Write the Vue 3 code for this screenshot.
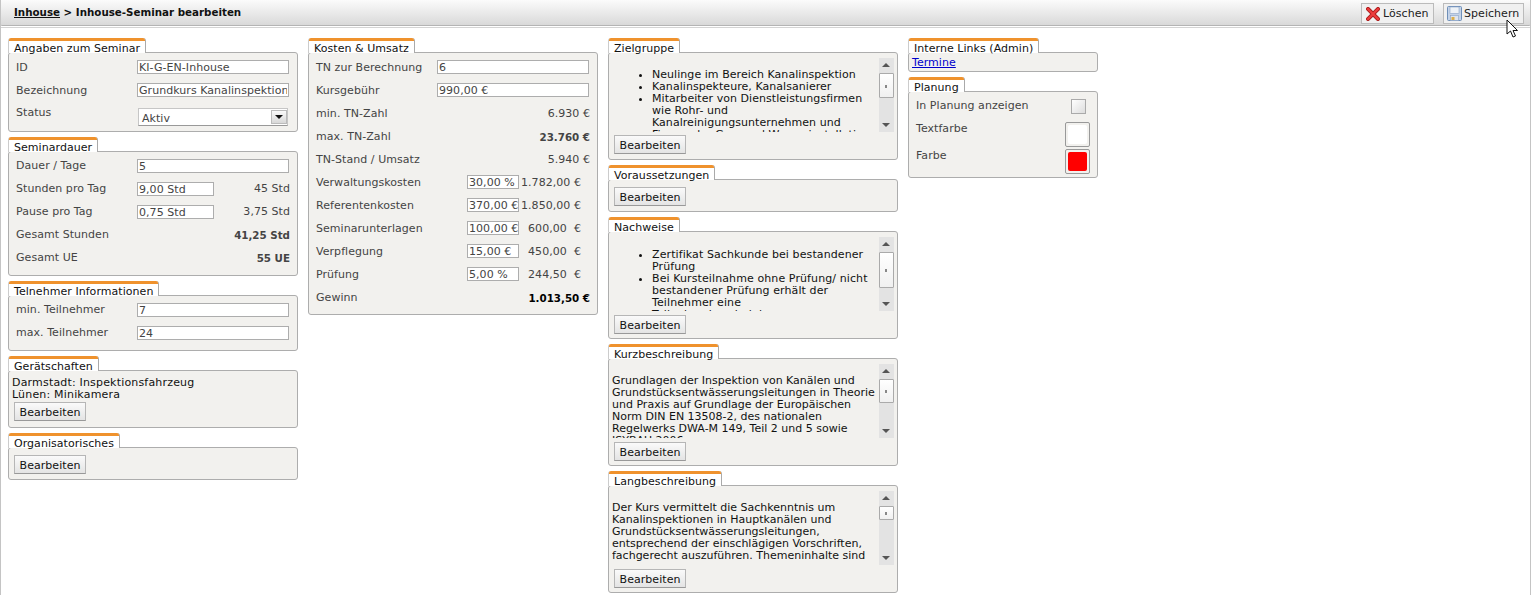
<script setup>
const duration = [
  { label: 'Stunden pro Tag', input: '9,00 Std', value: '45 Std' },
  { label: 'Pause pro Tag', input: '0,75 Std', value: '3,75 Std' }
]
const costs = [
  { label: 'Verwaltungskosten', input: '30,00 %', value: '1.782,00 €' },
  { label: 'Referentenkosten', input: '370,00 €', value: '1.850,00 €' },
  { label: 'Seminarunterlagen', input: '100,00 €', value: '600,00\u00a0 €' },
  { label: 'Verpflegung', input: '15,00 €', value: '450,00\u00a0 €' },
  { label: 'Prüfung', input: '5,00 %', value: '244,50\u00a0 €' }
]
const totals = [
  { label: 'min. TN-Zahl', value: '6.930 €' },
  { label: 'max. TN-Zahl', value: '23.760 €', bold: true },
  { label: 'TN-Stand / Umsatz', value: '5.940 €' }
]
const kurz = ['Grundlagen der Inspektion von Kanälen und', 'Grundstücksentwässerungsleitungen in Theorie', 'und Praxis auf Grundlage der Europäischen', 'Norm DIN EN 13508-2, des nationalen', 'Regelwerks DWA-M 149, Teil 2 und 5 sowie', 'ISYBAU 2006']
const lang = ['Der Kurs vermittelt die Sachkenntnis um', 'Kanalinspektionen in Hauptkanälen und', 'Grundstücksentwässerungsleitungen,', 'entsprechend der einschlägigen Vorschriften,', 'fachgerecht auszuführen. Themeninhalte sind']
</script>

<template>
  <div class="page">
    <header class="top">
      <div class="crumb"><a class="crumb-link">Inhouse</a> &gt; Inhouse-Seminar bearbeiten</div>
      <div class="actions">
        <button class="action del">
          <svg width="14" height="14" viewBox="0 0 14 14"><path d="M2 2 L12 12 M12 2 L2 12" fill="none" stroke="#a91e1e" stroke-width="4" stroke-linecap="square"/><path d="M2 2 L12 12 M12 2 L2 12" fill="none" stroke="#ee3b3b" stroke-width="2.2" stroke-linecap="square"/></svg>
          Löschen
        </button>
        <button class="action save">
          <svg width="15" height="15" viewBox="0 0 15 15"><rect x=".5" y=".5" width="14" height="14" rx="1" fill="#c4d3e8" stroke="#6f8fb8"/><rect x="3" y="1" width="9" height="6.5" fill="#eef2f7" stroke="#8aa4c6" stroke-width=".6"/><rect x="3.5" y="9.5" width="8" height="5" fill="#dfe5ee" stroke="#8aa4c6" stroke-width=".6"/><rect x="4.5" y="11" width="3" height="3" fill="#dcae4a"/></svg>
          Speichern
        </button>
      </div>
    </header>

    <main class="board">
      <div class="col">
        <section class="box">
          <h3 class="tab">Angaben zum Seminar</h3>
          <div class="body form">
            <div class="row low"><span class="lbl">ID</span><input class="inp wide" value="KI-G-EN-Inhouse" readonly></div>
            <div class="row low"><span class="lbl">Bezeichnung</span><input class="inp wide" value="Grundkurs Kanalinspektion" readonly></div>
            <div class="row status"><span class="lbl">Status</span>
              <div class="select"><span>Aktiv</span><i class="select-btn"></i></div>
            </div>
          </div>
        </section>
        <section class="box">
          <h3 class="tab">Seminardauer</h3>
          <div class="body form">
            <div class="row"><span class="lbl">Dauer / Tage</span><input class="inp wide" value="5" readonly></div>
            <div v-for="r in duration" :key="r.label" class="row">
              <span class="lbl">{{ r.label }}</span><input class="inp mid" :value="r.input" readonly><span class="val">{{ r.value }}</span>
            </div>
            <div class="row"><span class="lbl">Gesamt Stunden</span><b class="val">41,25 Std</b></div>
            <div class="row"><span class="lbl">Gesamt UE</span><b class="val">55 UE</b></div>
          </div>
        </section>
        <section class="box">
          <h3 class="tab">Telnehmer Informationen</h3>
          <div class="body form">
            <div class="row"><span class="lbl">min. Teilnehmer</span><input class="inp wide" value="7" readonly></div>
            <div class="row"><span class="lbl">max. Teilnehmer</span><input class="inp wide" value="24" readonly></div>
          </div>
        </section>
        <section class="box">
          <h3 class="tab">Gerätschaften</h3>
          <div class="body plain">
            <div class="note">Darmstadt: Inspektionsfahrzeug<br>Lünen: Minikamera</div>
            <button class="btn">Bearbeiten</button>
          </div>
        </section>
        <section class="box">
          <h3 class="tab">Organisatorisches</h3>
          <div class="body only"><button class="btn">Bearbeiten</button></div>
        </section>
      </div>

      <div class="col">
        <section class="box">
          <h3 class="tab">Kosten &amp; Umsatz</h3>
          <div class="body form">
            <div class="row low"><span class="lbl">TN zur Berechnung</span><input class="inp wide" value="6" readonly></div>
            <div class="row low"><span class="lbl">Kursgebühr</span><input class="inp wide" value="990,00 €" readonly></div>
            <div v-for="r in totals" :key="r.label" class="row low">
              <span class="lbl">{{ r.label }}</span><span class="val" :class="{ strong: r.bold }">{{ r.value }}</span>
            </div>
            <div v-for="r in costs" :key="r.label" class="row low cost">
              <span class="lbl">{{ r.label }}</span><input class="inp small" :value="r.input" readonly><span class="val">{{ r.value }}</span>
            </div>
            <div class="row low"><span class="lbl">Gewinn</span><b class="val black">1.013,50 €</b></div>
          </div>
        </section>
      </div>

      <div class="col">
        <section class="box">
          <h3 class="tab">Zielgruppe</h3>
          <div class="body rich first">
            <div class="scroller">
              <div class="text">
                <ul>
                  <li>Neulinge im Bereich Kanalinspektion</li>
                  <li>Kanalinspekteure, Kanalsanierer</li>
                  <li>Mitarbeiter von Dienstleistungsfirmen wie Rohr- und Kanalreinigungsunternehmen und Firmen der Gas- und Wasserinstallation</li>
                </ul>
              </div>
              <div class="bar"><i class="up"></i><i class="thumb t1"></i><i class="down"></i></div>
            </div>
            <button class="btn">Bearbeiten</button>
          </div>
        </section>
        <section class="box">
          <h3 class="tab">Voraussetzungen</h3>
          <div class="body only"><button class="btn">Bearbeiten</button></div>
        </section>
        <section class="box">
          <h3 class="tab">Nachweise</h3>
          <div class="body rich">
            <div class="scroller">
              <div class="text proof">
                <ul>
                  <li>Zertifikat Sachkunde bei bestandener Prüfung</li>
                  <li>Bei Kursteilnahme ohne Prüfung/ nicht bestandener Prüfung erhält der Teilnehmer eine Teilnahmebescheinigung</li>
                </ul>
              </div>
              <div class="bar"><i class="up"></i><i class="thumb t2"></i><i class="down"></i></div>
            </div>
            <button class="btn">Bearbeiten</button>
          </div>
        </section>
        <section class="box">
          <h3 class="tab">Kurzbeschreibung</h3>
          <div class="body rich">
            <div class="scroller">
              <div class="text para"><p><span v-for="l in kurz" :key="l" class="line">{{ l }}</span></p></div>
              <div class="bar"><i class="up"></i><i class="thumb t3"></i><i class="down"></i></div>
            </div>
            <button class="btn">Bearbeiten</button>
          </div>
        </section>
        <section class="box">
          <h3 class="tab">Langbeschreibung</h3>
          <div class="body rich">
            <div class="scroller">
              <div class="text para"><p><span v-for="l in lang" :key="l" class="line">{{ l }}</span></p></div>
              <div class="bar"><i class="up"></i><i class="thumb t4"></i><i class="down"></i></div>
            </div>
            <button class="btn">Bearbeiten</button>
          </div>
        </section>
      </div>

      <div class="col narrow">
        <section class="box">
          <h3 class="tab">Interne Links (Admin)</h3>
          <div class="body links"><a class="link">Termine</a></div>
        </section>
        <section class="box">
          <h3 class="tab">Planung</h3>
          <div class="body form plan">
            <div class="row first-row"><span class="lbl">In Planung anzeigen</span><i class="check"></i></div>
            <div class="row"><span class="lbl">Textfarbe</span><i class="swatch"><i class="white"></i></i></div>
            <div class="row"><span class="lbl">Farbe</span><i class="swatch"><i class="red"></i></i></div>
          </div>
        </section>
      </div>
    </main>

    <svg class="cursor" width="14" height="20" viewBox="0 0 14 20"><path d="M1 1 V15 L4.5 12 L7 18 L9.5 17 L7 11.5 H11.5 Z" fill="#fff" stroke="#111" stroke-width="1"/></svg>
  </div>
</template>

<style>
html, body { margin: 0; background: #fff; }
</style>

<style scoped>
.page {
  position: relative;
  width: 1531px;
  height: 595px;
  box-sizing: border-box;
  border-left: 1px solid #c4c4c4;
  border-right: 1px solid #c4c4c4;
  font: 11px/12px "DejaVu Sans", Verdana, sans-serif;
  letter-spacing: .05px;
  color: #111;
  overflow: hidden;
}
.top {
  height: 26px;
  box-sizing: border-box;
  margin-left: -1px;
  margin-right: -1px;
  border-bottom: 1px solid #b4b4b4;
  border-radius: 0 0 3px 3px;
  background: linear-gradient(#fbfbfb, #d9d9d9);
  display: flex;
  align-items: flex-start;
  justify-content: space-between;
  padding: 3px 7px 0 14px;
}
.crumb { font-weight: bold; font-size: 10.3px; letter-spacing: 0; line-height: 19px; color: #111; }
.crumb-link { text-decoration: underline; }
.actions { display: flex; gap: 9px; }
.action {
  height: 21px;
  box-sizing: border-box;
  display: flex;
  align-items: center;
  gap: 3px;
  padding: 0 0 0 4px;
  border: 1px solid #bbb;
  background: #f0f0f0;
  font: inherit;
  letter-spacing: inherit;
  color: #222;
}
.del { width: 73px; }
.save { width: 81px; padding-left: 3px; gap: 2px; }
.board {
  display: flex;
  gap: 10px;
  padding: 10px 0 0 7px;
  margin-top: 1px;
  border-top: 1px solid #d4d4d4;
  align-items: flex-start;
}
.col { width: 290px; display: flex; flex-direction: column; gap: 5px; }
.narrow { width: 190px; }
.box { display: flex; flex-direction: column; align-items: flex-start; }
.tab {
  position: relative;
  z-index: 1;
  margin: 0 0 -1px;
  height: 15px;
  box-sizing: border-box;
  padding: 5px 5px 0;
  background: #fff;
  border-right: 1px solid #aaa;
  border-left: 1px solid #ccc;
  border-radius: 3px 3px 0 0;
  font: inherit;
  font-size: 11px;
  line-height: 11px;
  color: #111;
}
.tab::before {
  content: "";
  position: absolute;
  left: 0;
  right: 0;
  top: 0;
  height: 3px;
  background: #ef922d;
  border-radius: 2px 2px 0 0;
}
.body {
  width: 100%;
  box-sizing: border-box;
  background: #f2f1ee;
  border: 1px solid #adadad;
  border-radius: 3px;
}
.form { padding: 3px 8px 5px 7px; display: flex; flex-direction: column; }
.row { height: 23px; display: flex; align-items: flex-start; padding-top: 4px; box-sizing: border-box; color: #444; flex: none; }
.lbl { width: 121px; flex: none; margin-top: 1px; }
.val { margin-left: auto; margin-right: -1px; margin-top: 1px; white-space: pre; }
.low .lbl, .low .val { margin-top: 2px; }
.strong { font-weight: bold; }
b.val, .val.strong { font-weight: bold; font-size: 10.3px; letter-spacing: 0; }
.black { color: #000; }
.inp {
  height: 14px;
  box-sizing: border-box;
  padding: 0 1px;
  border: 1px solid #adadad;
  background: #fff;
  font: inherit;
  letter-spacing: inherit;
  color: #444;
  outline: none;
}
.wide { width: 152px; }
.mid { width: 77px; }
.lbl + .small { margin-left: 30px; }
.small { width: 52px; padding-right: 0; }
.cost .val { margin-right: 8px; }
.row.status { height: 24px; }
.select {
  width: 150px;
  height: 18px;
  margin: 2px 0 0 1px;
  box-sizing: border-box;
  border: 1px solid #c6c6c6;
  border-bottom-color: #999;
  background: #fff;
  display: flex;
  justify-content: space-between;
  padding: 4px 0 0 3px;
  color: #444;
}
.select-btn {
  position: relative;
  width: 16px;
  height: 14px;
  margin-top: -3px;
  background: linear-gradient(#fafafa, #d8d8d8);
  border: 1px solid #bbb;
  box-sizing: border-box;
}
.select-btn::after {
  content: "";
  position: absolute;
  left: 3px;
  top: 4px;
  border: 4px solid transparent;
  border-top: 4px solid #111;
  border-bottom: 0;
}
.btn {
  width: 72px;
  height: 19px;
  padding: 2px 0 0;
  box-sizing: border-box;
  border: 1px solid #b6b6b6;
  border-bottom-color: #999;
  background: linear-gradient(#fafafa, #e4e4e4);
  font: inherit;
  letter-spacing: inherit;
  color: #111;
}
.plain { padding: 6px 3px 6px 3px; }
.note { margin-bottom: 1px; letter-spacing: .18px; }
.plain .btn { margin-left: 2px; display: block; }
.only { padding: 7px 5px 5px 5px; height: 33px; }
.rich { padding: 5px 3px 4px 3px; height: 108px; }
.rich .btn { margin: 4px 0 0 2px; display: block; }
.rich.first .btn { margin-top: 3px; }
.scroller { display: flex; height: 74px; }
.text { width: 267px; overflow: hidden; flex: none; }
.text ul { margin: 11px 0 0; padding: 0 0 0 40px; }
.proof ul { margin-top: 12px; letter-spacing: .1px; }
.text p { margin: 11px 0 0; letter-spacing: 0; }
.line { display: block; white-space: nowrap; }
.bar {
  width: 15px;
  flex: none;
  background: #e3e3e3;
  position: relative;
}
.up, .down {
  position: absolute;
  left: 3px;
  border: 4px solid transparent;
}
.up { top: 5px; border-top: 0; border-bottom-color: #555; }
.down { bottom: 5px; border-bottom: 0; border-top-color: #555; }
.thumb {
  position: absolute;
  left: 0;
  top: 15px;
  width: 15px;
  box-sizing: border-box;
  background: linear-gradient(#fff, #f0f0f0);
  border: 1px solid #aaa;
  border-radius: 1px;
}
.thumb::after {
  content: "";
  position: absolute;
  left: 5px;
  top: 50%;
  width: 2px;
  height: 3px;
  margin-top: -1px;
  background: #888;
}
.t1 { height: 25px; }
.t2 { height: 36px; }
.t3 { height: 24px; }
.t4 { height: 14px; }
.links { padding: 4px 3px 0; height: 20px; }
.link { color: #00c; text-decoration: underline; }
.plan { padding: 2px 8px 3px 7px; }
.plan .row { height: 27px; padding-top: 2px; }
.plan .first-row { height: 26px; padding-top: 5px; }
.check {
  margin-left: auto;
  margin-right: 3px;
  width: 15px;
  height: 15px;
  box-sizing: border-box;
  border: 1px solid #aaa;
  background: linear-gradient(135deg, #fff, #ddd);
}
.swatch {
  margin-left: auto;
  margin-right: -1px;
  width: 25px;
  height: 25px;
  box-sizing: border-box;
  border: 1px solid #999;
  border-radius: 2px;
  background: #f2f1ee;
  padding: 2px;
  display: block;
}
.swatch i { display: block; width: 100%; height: 100%; border-radius: 2px; }
.white { background: #fff; }
.red { background: #f00; }
.cursor { position: absolute; left: 1505px; top: 19px; }
</style>
